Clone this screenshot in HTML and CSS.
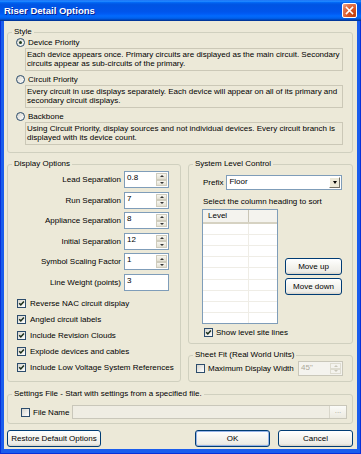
FILE: index.html
```html
<!DOCTYPE html>
<html>
<head>
<meta charset="utf-8">
<title>Riser Detail Options</title>
<link rel="stylesheet" href="styles.css">
</head>
<body>
<div class="window">
  <div class="titlebar">
    <span class="title">Riser Detail Options</span>
    <span class="close"><svg width="9" height="9" viewBox="0 0 9 9"><path d="M1.5 1.5L7.5 7.5M7.5 1.5L1.5 7.5" stroke="#fff" stroke-width="1.6" stroke-linecap="square"/></svg></span>
  </div>
  <div class="frame">
    <div class="client">
      <fieldset class="group style-group">
        <legend>Style</legend>
        <div class="group-body style-body">
          <div class="radio-row"><span class="radio checked"></span><span>Device Priority</span></div>
          <div class="desc">Each device appears once. Primary circuits are displayed as the main circuit. Secondary<br>circuits appear as sub-circuits of the primary.</div>
          <div class="radio-row"><span class="radio"></span><span>Circuit Priority</span></div>
          <div class="desc">Every circuit in use displays separately. Each device will appear on all of its primary and<br>secondary circuit displays.</div>
          <div class="radio-row"><span class="radio"></span><span>Backbone</span></div>
          <div class="desc">Using Circuit Priority, display sources and not individual devices. Every circuit branch is<br>displayed with its device count.</div>
        </div>
      </fieldset>

      <div class="columns">
        <fieldset class="group display-group">
          <legend>Display Options</legend>
          <div class="group-body display-body">
            <div class="fields">
              <div class="field"><span class="field-label">Lead Separation</span><div class="spin"><span class="spin-val">0.8</span><span class="spin-btns"><span class="up"></span><span class="down"></span></span></div></div>
              <div class="field"><span class="field-label">Run Separation</span><div class="spin"><span class="spin-val">7</span><span class="spin-btns"><span class="up"></span><span class="down"></span></span></div></div>
              <div class="field"><span class="field-label">Appliance Separation</span><div class="spin"><span class="spin-val">8</span><span class="spin-btns"><span class="up"></span><span class="down"></span></span></div></div>
              <div class="field"><span class="field-label">Initial Separation</span><div class="spin"><span class="spin-val">12</span><span class="spin-btns"><span class="up"></span><span class="down"></span></span></div></div>
              <div class="field"><span class="field-label">Symbol Scaling Factor</span><div class="spin"><span class="spin-val">1</span><span class="spin-btns"><span class="up"></span><span class="down"></span></span></div></div>
              <div class="field"><span class="field-label">Line Weight (points)</span><div class="textbox">3</div></div>
            </div>
            <div class="checks">
              <div class="check-row"><span class="checkbox"><svg viewBox="0 0 7 7"><path d="M1.2 3.3L2.8 4.9L5.9 1.6" /></svg></span><span>Reverse NAC circuit display</span></div>
              <div class="check-row"><span class="checkbox"><svg viewBox="0 0 7 7"><path d="M1.2 3.3L2.8 4.9L5.9 1.6" /></svg></span><span>Angled circuit labels</span></div>
              <div class="check-row"><span class="checkbox"><svg viewBox="0 0 7 7"><path d="M1.2 3.3L2.8 4.9L5.9 1.6" /></svg></span><span>Include Revision Clouds</span></div>
              <div class="check-row"><span class="checkbox"><svg viewBox="0 0 7 7"><path d="M1.2 3.3L2.8 4.9L5.9 1.6" /></svg></span><span>Explode devices and cables</span></div>
              <div class="check-row"><span class="checkbox"><svg viewBox="0 0 7 7"><path d="M1.2 3.3L2.8 4.9L5.9 1.6" /></svg></span><span>Include Low Voltage System References</span></div>
            </div>
          </div>
        </fieldset>

        <div class="right-col">
          <fieldset class="group level-group">
            <legend>System Level Control</legend>
            <div class="group-body level-body">
              <div class="prefix-row">
                <span>Prefix</span>
                <div class="combo"><span class="combo-val">Floor</span><span class="combo-btn"><span class="tri-down"></span></span></div>
              </div>
              <div class="hint">Select the column heading to sort</div>
              <div class="list-row-wrap">
                <div class="list">
                  <div class="list-head"><span class="hcell c1">Level</span><span class="hcell c2"></span></div>
                  <div class="list-body">
                    <div class="lrow"><span class="c1"></span><span class="c2"></span></div>
                    <div class="lrow"><span class="c1"></span><span class="c2"></span></div>
                    <div class="lrow"><span class="c1"></span><span class="c2"></span></div>
                    <div class="lrow"><span class="c1"></span><span class="c2"></span></div>
                    <div class="lrow"><span class="c1"></span><span class="c2"></span></div>
                    <div class="lrow"><span class="c1"></span><span class="c2"></span></div>
                    <div class="lrow"><span class="c1"></span><span class="c2"></span></div>
                    <div class="lrow"><span class="c1"></span><span class="c2"></span></div>
                    <div class="lrow"><span class="c1"></span><span class="c2"></span></div>
                  </div>
                </div>
                <div class="move-btns">
                  <button class="btn move">Move up</button>
                  <button class="btn move">Move down</button>
                </div>
              </div>
              <div class="check-row site-row"><span class="checkbox"><svg viewBox="0 0 7 7"><path d="M1.2 3.3L2.8 4.9L5.9 1.6" /></svg></span><span>Show level site lines</span></div>
            </div>
          </fieldset>

          <fieldset class="group sheet-group">
            <legend>Sheet Fit (Real World Units)</legend>
            <div class="group-body sheet-body">
              <span class="checkbox"></span><span class="sheet-label">Maximum Display Width</span>
              <div class="spin disabled"><span class="spin-val">45"</span><span class="spin-btns"><span class="up"></span><span class="down"></span></span></div>
            </div>
          </fieldset>
        </div>
      </div>

      <fieldset class="group settings-group">
        <legend>Settings File - Start with settings from a specified file.</legend>
        <div class="group-body settings-body">
          <span class="checkbox"></span><span class="file-label">File Name</span>
          <div class="filebox"><span class="file-val"></span><span class="browse">...</span></div>
        </div>
      </fieldset>

      <div class="button-row">
        <button class="btn restore">Restore Default Options</button>
        <span class="spacer"></span>
        <button class="btn ok default">OK</button>
        <button class="btn cancel">Cancel</button>
      </div>
    </div>
  </div>
</div>
</body>
</html>
```

FILE: styles.css
```css
* { box-sizing: border-box; }
html, body { margin: 0; padding: 0; }
body {
  width: 361px;
  height: 454px;
  overflow: hidden;
  background: #ffffff;
  font-family: "Liberation Sans", Arial, sans-serif;
  font-size: 8px;
  color: #000;
  white-space: nowrap;
}
.window {
  width: 361px;
  height: 454px;
  display: flex;
  flex-direction: column;
}
.titlebar {
  height: 21px;
  flex: none;
  display: flex;
  align-items: center;
  padding: 0 4px 0 4px;
  background: linear-gradient(to bottom, #0058ee 0%, #3593ff 4%, #288eff 6%, #127dff 8%, #036ffc 10%, #0262ee 14%, #0057e5 20%, #0054e3 24%, #0055eb 56%, #005bf5 66%, #026afe 76%, #0062ef 86%, #0052d6 92%, #0040ab 94%, #003092 100%);
}
.title {
  color: #fff;
  font-weight: bold;
  font-size: 9.5px;
  text-shadow: 1px 1px 0 #0a1e8c;
}
.close {
  margin-left: auto;
  width: 15px;
  height: 15px;
  border: 1px solid #fff;
  border-radius: 2px;
  background: radial-gradient(circle at 85% 85%, #c0400f 0%, #d9582a 45%, #e27a55 75%, #f1b49c 100%);
  display: flex;
  align-items: center;
  justify-content: center;
}
.frame {
  flex: 1;
  padding: 0 4px 5px 4px;
  background: #1a5ded;
  box-shadow: inset 1px 0 #0831d9, inset -1px 0 #0831d9, inset 0 -1px #0831d9;
  display: flex;
}
.client {
  flex: 1;
  background: #ece9d8;
  padding: 0 4px 0 3px;
  display: flex;
  flex-direction: column;
}

/* group boxes */
.group {
  margin: 0;
  padding: 0;
  min-width: 0;
  border: 1px solid #d0d0bf;
  border-radius: 3px;
}
.group legend {
  padding: 0 2px;
  margin-left: 4px;
  line-height: 10px;
  height: 10px;
}
.style-group { margin-top: 6px; }
.style-body { padding: 0 9px 7px 8px; }

.radio-row {
  height: 11px;
  display: flex;
  align-items: center;
  gap: 3px;
}
.radio {
  width: 9px;
  height: 9px;
  flex: none;
  border-radius: 50%;
  border: 1px solid #2c4c6c;
  background: linear-gradient(135deg, #d6d5cd, #ffffff);
  display: flex;
  align-items: center;
  justify-content: center;
}
.radio.checked::after {
  content: "";
  width: 3px;
  height: 3px;
  border-radius: 50%;
  background: #1f3d1f;
}
.desc {
  margin-left: 9px;
  height: 23px;
  border: 1px solid #cbc8b7;
  padding: 1px 1px;
  line-height: 9px;
  overflow: hidden;
}
.desc + .radio-row { margin-top: 3px; }

.columns {
  display: flex;
  gap: 7px;
  margin-top: 6px;
  align-items: flex-start;
}
.display-group { width: 174px; flex: none; }
.display-body { padding: 2px 11px 5px 9px; }
.fields {
  display: flex;
  flex-direction: column;
  gap: 3.6px;
}
.field {
  height: 17px;
  display: flex;
  align-items: center;
  justify-content: flex-end;
  gap: 3px;
}
.spin, .textbox {
  width: 45px;
  height: 17px;
  border: 1px solid #7f9db9;
  background: #fff;
  display: flex;
  flex: none;
}
.textbox { padding: 1px 0 0 2px; line-height: 10px; }
.spin-val {
  flex: 1;
  padding: 1px 0 0 2px;
  line-height: 10px;
}
.spin-btns {
  width: 12px;
  display: flex;
  flex-direction: column;
  padding: 1px 1px 1px 0;
}
.spin-btns span {
  flex: 1;
  background: linear-gradient(#f7f6f0, #e3e0d2);
  border: 1px solid #cfccbd;
  display: flex;
  align-items: center;
  justify-content: center;
}
.spin-btns .up::before {
  content: "";
  border-left: 2px solid transparent;
  border-right: 2px solid transparent;
  border-bottom: 2px solid #333;
}
.spin-btns .down::before {
  content: "";
  border-left: 2px solid transparent;
  border-right: 2px solid transparent;
  border-top: 2px solid #333;
}
.spin.disabled { border-color: #c9c7ba; background: #f4f3ee; color: #aca899; }
.spin.disabled .spin-btns span { background: #f4f3ee; border-color: #dedcd0; }
.spin.disabled .spin-btns .up::before { border-bottom-color: #c9c7ba; }
.spin.disabled .spin-btns .down::before { border-top-color: #c9c7ba; }

.checks { margin-top: 4.6px; }
.check-row {
  height: 16px;
  display: flex;
  align-items: center;
  gap: 4px;
}
.checkbox {
  width: 9px;
  height: 9px;
  flex: none;
  border: 1px solid #2c4c6c;
  background: linear-gradient(135deg, #d6d5cd, #ffffff);
  display: flex;
}
.checkbox svg {
  width: 7px;
  height: 7px;
  fill: none;
  stroke: #1a2e1a;
  stroke-width: 1.5px;
}

.right-col { flex: 1; min-width: 0; display: flex; flex-direction: column; }
.level-body { padding: 6px 10px 5px 14px; }
.prefix-row {
  height: 15px;
  display: flex;
  align-items: center;
  gap: 3px;
}
.combo {
  flex: 1;
  height: 15px;
  border: 1px solid #7f9db9;
  background: #fff;
  display: flex;
}
.combo-val { flex: 1; padding-left: 2px; line-height: 11px; }
.combo-btn {
  width: 11px;
  margin: 1px;
  background: #ece9d8;
  border: 1px solid;
  border-color: #fff #716f64 #716f64 #fff;
  display: flex;
  align-items: center;
  justify-content: center;
}
.tri-down {
  border-left: 2.5px solid transparent;
  border-right: 2.5px solid transparent;
  border-top: 3px solid #000;
}
.hint { margin-top: 6px; height: 11px; line-height: 11px; }
.list-row-wrap { margin-top: 2px; display: flex; margin-left: -1px; }
.list {
  width: 76px;
  height: 115px;
  border: 1px solid #7f9db9;
  background: #fff;
  display: flex;
  flex-direction: column;
}
.list-head {
  height: 14px;
  display: flex;
  flex: none;
  background: #f4f3ee;
  border-bottom: 2px solid #d6d2c2;
}
.hcell { line-height: 11px; padding-left: 5px; }
.list-head .c1 { border-right: 1px solid #c9c5b6; }
.c1 { width: 46px; flex: none; }
.c2 { flex: 1; }
.list-body { flex: 1; display: flex; flex-direction: column; }
.lrow { flex: 1; display: flex; border-bottom: 1px solid #efede6; }
.lrow:last-child { border-bottom: none; }
.lrow .c1 { border-right: 1px solid #efede6; }
.move-btns {
  margin: 49px 0 0 7px;
  width: 57px;
  display: flex;
  flex-direction: column;
  gap: 3px;
}
.site-row { margin-top: 3px; height: 11px; margin-left: 1px; gap: 3px; }

.sheet-group { margin-top: 6px; }
.sheet-body {
  padding: 1px 9px 5px 7px;
  height: 21px;
  display: flex;
  align-items: center;
}
.sheet-label { margin-left: 3px; }
.sheet-body .spin { margin-left: auto; height: 15px; }

.settings-group { margin-top: 7px; }
.settings-body {
  padding: 6px 5px 4px 13px;
  display: flex;
  align-items: center;
}
.file-label { margin-left: 3px; margin-right: 3px; }
.filebox {
  flex: 1;
  height: 14px;
  border: 1px solid #c9c7ba;
  background: #efede3;
  display: flex;
}
.file-val { flex: 1; }
.browse {
  width: 17px;
  border-left: 1px solid #d8d6ca;
  background: linear-gradient(#fbfbf8, #eceae0);
  color: #aca899;
  text-align: center;
  line-height: 9px;
}

/* buttons */
.btn {
  font-family: inherit;
  font-size: 8px;
  color: #000;
  height: 17px;
  padding: 0;
  margin: 0;
  border: 1px solid #003c74;
  border-radius: 3px;
  background: linear-gradient(180deg, #ffffff 0%, #f4f3ee 50%, #ecebe6 86%, #d6d0c5 100%);
}
.move { width: 57px; }
.button-row {
  margin-top: 6px;
  display: flex;
  gap: 8px;
}
.restore { width: 94px; }
.spacer { flex: 1; }
.ok, .cancel { width: 75px; }
.default { box-shadow: inset 0 0 0 1px #97b4e8; }
```
